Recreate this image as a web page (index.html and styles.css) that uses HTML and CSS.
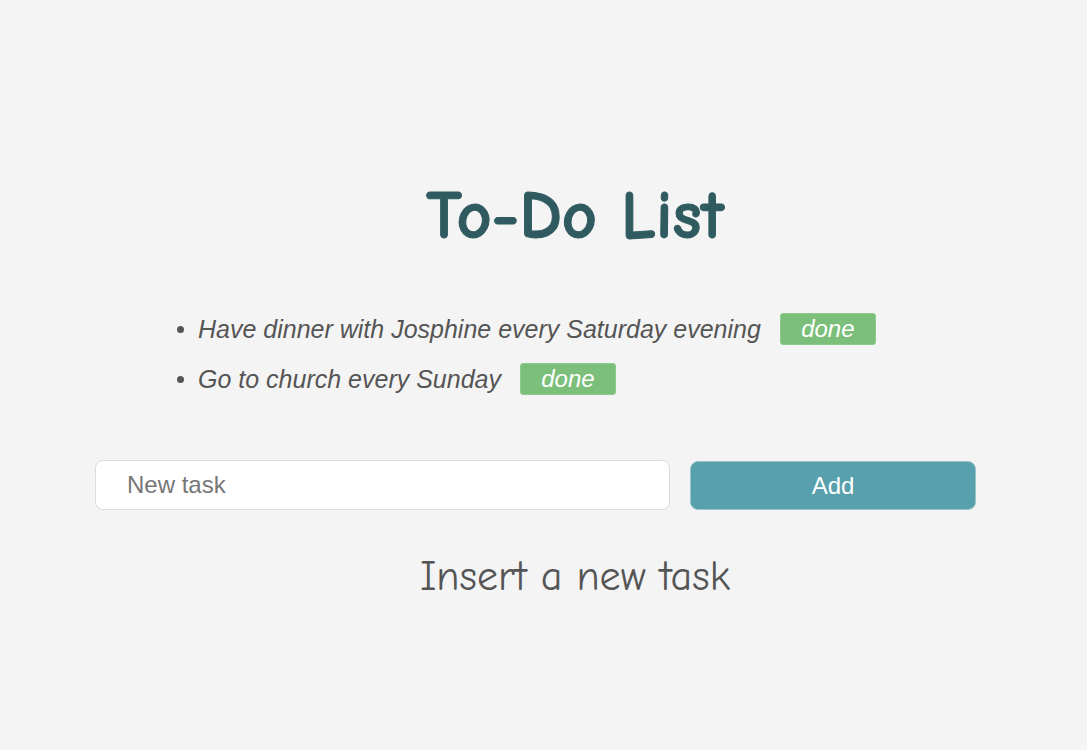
FILE: index.html
```html
<!DOCTYPE html>
<html lang="en">
<head>
<meta charset="utf-8">
<title>To-Do List</title>
<link rel="stylesheet" href="styles.css">
</head>
<body>
<main class="app">
  <h1 class="title">To-Do List</h1>
  <ul class="tasks">
    <li class="task"><span class="task-text">Have dinner with Josphine every Saturday evening</span><button class="done">done</button></li>
    <li class="task"><span class="task-text">Go to church every Sunday</span><button class="done">done</button></li>
  </ul>
  <form class="add-form">
    <input class="task-input" type="text" placeholder="New task">
    <button class="add-btn" type="button">Add</button>
  </form>
  <p class="hint">Insert a new task</p>
</main>
</body>
</html>
```

FILE: styles.css
```css
html, body {
  margin: 0;
  padding: 0;
  background: #f4f4f4;
}
body {
  font-family: "Liberation Sans", Arial, sans-serif;
  color: #555;
}
.app {
  margin-left: 95px;
  width: 960px;
  padding-top: 180px;
}
.title {
  margin: 0;
  text-align: center;
  font-family: "Comic Sans MS", "Comic Neue", "DejaVu Sans", sans-serif;
  font-weight: bold;
  font-size: 68px;
  line-height: 72px;
  color: #2f5b60;
  -webkit-text-stroke: 1px #2f5b60;
}
.tasks {
  margin: 61px 0 0 0;
  padding: 0 0 0 103px;
  list-style: disc;
}
.task {
  height: 50px;
  font-size: 25px;
  font-style: italic;
  color: #555;
}
.task::marker {
  font-size: 24px;
}
.task-text {
  display: inline-block;
  vertical-align: middle;
  line-height: 32px;
}
.done {
  display: inline-block;
  vertical-align: middle;
  margin-left: 19px;
  width: 96px;
  height: 32px;
  padding: 0;
  border: 1px solid #8cc98c;
  border-radius: 3px;
  background: #7bbf7b;
  color: #fff;
  font-family: "Liberation Sans", Arial, sans-serif;
  font-style: italic;
  font-size: 24px;
  line-height: 28px;
}
.add-form {
  display: flex;
  gap: 20px;
  width: 881px;
  margin-top: 47px;
}
.task-input {
  box-sizing: border-box;
  width: 575px;
  height: 50px;
  padding: 0 31px;
  border: 1px solid #dcdbe3;
  border-radius: 8px;
  background: #fff;
  font-family: "Liberation Sans", Arial, sans-serif;
  font-size: 24px;
  color: #555;
  outline: none;
}
.task-input::placeholder {
  color: #777;
}
.add-btn {
  box-sizing: border-box;
  width: 286px;
  height: 49px;
  margin-top: 1px;
  border: 1px solid #9cc3ca;
  border-radius: 8px;
  background: #58a0ac;
  color: #fff;
  font-family: "Liberation Sans", Arial, sans-serif;
  font-size: 24px;
}
.hint {
  margin: 42px 0 0 0;
  text-align: center;
  font-family: "Comic Sans MS", "Comic Neue", "DejaVu Sans", sans-serif;
  font-size: 42px;
  line-height: 50px;
  color: #555;
}
```
